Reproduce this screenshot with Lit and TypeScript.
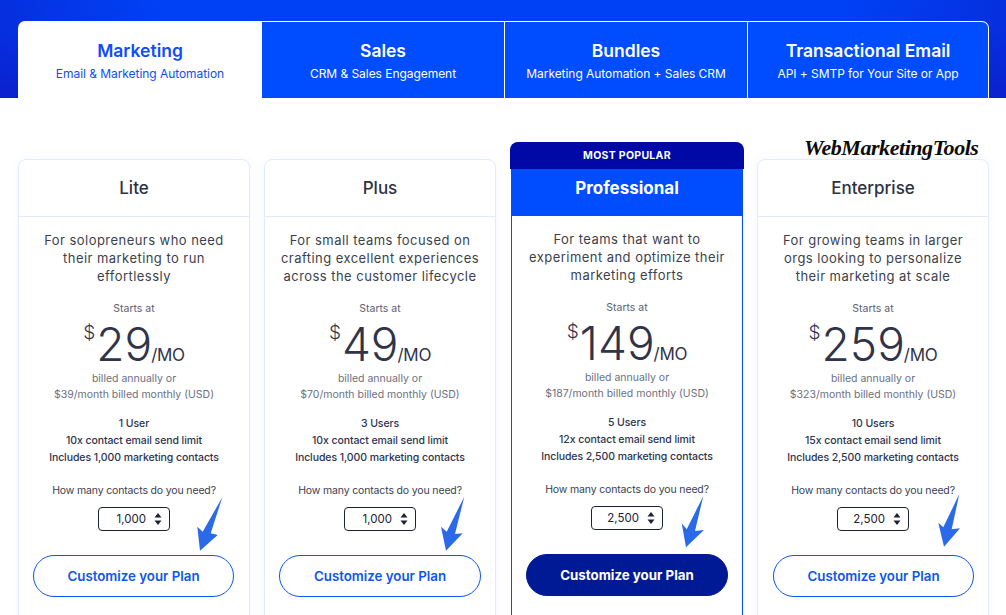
import { LitElement, html, css, svg } from "lit";
import { customElement } from "lit/decorators.js";

const tabs = [
  ["Marketing", "Email & Marketing Automation"],
  ["Sales", "CRM & Sales Engagement"],
  ["Bundles", "Marketing Automation + Sales CRM"],
  ["Transactional Email", "API + SMTP for Your Site or App"],
];

const plans = [
  { name: "Lite", desc: ["For solopreneurs who need", "their marketing to run", "effortlessly"], price: "29", monthly: "$39", feats: ["1 User", "10x contact email send limit", "Includes 1,000 marketing contacts"], qty: "1,000", popular: false },
  { name: "Plus", desc: ["For small teams focused on", "crafting excellent experiences", "across the customer lifecycle"], price: "49", monthly: "$70", feats: ["3 Users", "10x contact email send limit", "Includes 1,000 marketing contacts"], qty: "1,000", popular: false },
  { name: "Professional", desc: ["For teams that want to", "experiment and optimize their", "marketing efforts"], price: "149", monthly: "$187", feats: ["5 Users", "12x contact email send limit", "Includes 2,500 marketing contacts"], qty: "2,500", popular: true },
  { name: "Enterprise", desc: ["For growing teams in larger", "orgs looking to personalize", "their marketing at scale"], price: "259", monthly: "$323", feats: ["10 Users", "15x contact email send limit", "Includes 2,500 marketing contacts"], qty: "2,500", popular: false },
];

const arrows = [
  "M222.3 497.3 L210.7 533.3 L217.7 535 L200 550.7 L197.3 526.7 L202.7 531.7 Z",
  "M464.3 496.7 L455 534 L462.7 533.3 L446 550.7 L441 526.7 L446.7 531.7 Z",
  "M703.3 496 L695 531 L704 530 L686 547.3 L681.7 523.3 L686.7 529.3 Z",
  "M959.3 494 L951.7 529.3 L960 528.3 L944 546.7 L938.3 522.7 L943.3 527.3 Z",
];

@customElement("app-root")
export class AppRoot extends LitElement {
  static styles = css`
    :host { display: block; width: 1006px; height: 615px; overflow: hidden; background: #fff; position: relative;
      font-family: "Inter", "Roboto", sans-serif; color: #2d3142; }
    .hero { height: 98px; box-sizing: border-box; padding: 21px 18px 0;
      background: radial-gradient(ellipse 62% 150% at 50% 0%, #0041f5 55%, #0a22cf 100%); }
    .tabs { display: flex; height: 77px; width: 970px; }
    .tab { flex: 0 0 243px; box-sizing: border-box; background: #004cff; color: #fff; text-align: center;
      border-top: 1px solid #fff; border-right: 1px solid #fff; padding-top: 18px; }
    .tab:first-child { flex-basis: 244px; background: #fff; color: #0f4dff; border-radius: 7px 0 0 0; border: 0; padding-top: 19px; }
    .tab:last-child { flex-basis: 241px; border-radius: 0 7px 0 0; }
    .tab b { display: block; font-size: 17.5px; line-height: 21px; font-weight: 600; }
    .tab span { display: block; font-size: 12px; line-height: 16px; margin-top: 5px; letter-spacing: -0.05px; }
    .plans { display: flex; align-items: flex-start; padding: 61px 17px 0 18px; gap: 14px; }
    .card { position: relative; flex: 0 0 232px; box-sizing: border-box; height: 480px; border: 1px solid #e3ebfb;
      border-radius: 8px 8px 0 0; text-align: center; box-shadow: 0 0 12px rgba(60,90,220,.05); }
    .card.pop { margin: -17px 0 0 1px; height: 497px; border-width: 0 1px; border-color: #004cff; border-radius: 8px 8px 0 0; box-shadow: none; }
    .badge { margin: 0 -2px; height: 27px; background: #0009a5; color: #fff; border-radius: 8px 8px 0 0; font-size: 10.5px; font-weight: 700;
      line-height: 27px; letter-spacing: .3px; }
    .head { height: 57px; box-sizing: border-box; border-bottom: 1px solid #e3ebfb; font-size: 17px; line-height: 56px; font-weight: 500; color: #2d3142; }
    .pop .head { height: 47px; background: #004cff; color: #fff; border: 0; font-weight: 700; line-height: 38px; }
    .body { padding-top: 14px; }
    .desc { font-size: 13px; line-height: 18px; color: #3c3f4c; letter-spacing: .45px; white-space: nowrap; }
    .starts { margin-top: 17px; font-size: 10.5px; line-height: 14px; color: #5e6172; }
    .price { display: flex; justify-content: center; align-items: flex-start; height: 50px; margin-top: 3px; color: #30344a; font-weight: 300; white-space: nowrap; }
    .cur { font-size: 19px; line-height: 22px; margin-top: 3px; margin-right: 1px; }
    .num { font-size: 46px; line-height: 50px; }
    .mo { font-size: 17px; line-height: 22px; margin: 25px 0 0 -1px; font-weight: 400; letter-spacing: -.3px; }
    .billed { margin-top: 2px; font-size: 10.5px; line-height: 16px; color: #6d7080; }
    .feats { margin-top: 12px; font-size: 10.5px; line-height: 17px; color: #2d3350; font-weight: 500; white-space: nowrap; letter-spacing: -.08px; }
    .q { margin-top: 18px; font-size: 10.5px; line-height: 14px; color: #3c4050; white-space: nowrap; letter-spacing: -.15px; }
    .sel { display: flex; align-items: center; justify-content: flex-end; box-sizing: border-box; width: 72px; height: 24px; margin: 9px auto 0;
      border: 1px solid #1c2233; border-radius: 4px; font-size: 11.5px; color: #1c2233; padding-right: 7px; gap: 8px; }
    .sel svg { display: block; }
    .btn { box-sizing: border-box; width: 201px; height: 42px; margin: 24px 0 0 14px; border: 1px solid #0f55f0; border-radius: 21px;
      color: #0f55f0; font-size: 13.3px; font-weight: 600; line-height: 40px; }
    .card:nth-child(2) .btn { width: 202px; }
    .card:nth-child(4) .btn { margin-left: 15px; }
    .pop .btn { width: 202px; background: #001a96; border-color: #001a96; color: #fff; font-weight: 700; }
    .arrows { position: absolute; inset: 0; pointer-events: none; }
    .logo { position: absolute; left: 804px; top: 133px; font: italic 700 22px/30px "Liberation Serif", serif; color: #0b0b0b; letter-spacing: -.45px; }
  `;

  render() {
    return html`
      <div class="hero"><div class="tabs">
        ${tabs.map(([t, s]) => html`<div class="tab"><b>${t}</b><span>${s}</span></div>`)}
      </div></div>
      <div class="plans">
        ${plans.map((p) => html`
          <div class="card ${p.popular ? "pop" : ""}">
            ${p.popular ? html`<div class="badge">MOST POPULAR</div>` : ""}
            <div class="head">${p.name}</div>
            <div class="body">
              <div class="desc">${p.desc.map((d) => html`<div>${d}</div>`)}</div>
              <div class="starts">Starts at</div>
              <div class="price"><span class="cur">$</span><span class="num">${p.price}</span><span class="mo">/MO</span></div>
              <div class="billed">billed annually or<br />${p.monthly}/month billed monthly (USD)</div>
              <div class="feats">${p.feats.map((f) => html`<div>${f}</div>`)}</div>
              <div class="q">How many contacts do you need?</div>
              <div class="sel">${p.qty}
                <svg width="8" height="14" viewBox="0 0 8 14"><path d="M4 1 L7.5 5.5 H.5 Z M4 13 L.5 8.5 H7.5 Z" fill="#1c2233"/></svg>
              </div>
              <div class="btn">Customize your Plan</div>
            </div>
          </div>`)}
      </div>
      <svg class="arrows" width="1006" height="615" viewBox="0 0 1006 615">
        ${arrows.map((d) => svg`<path d=${d} fill="#2a6ae8"/>`)}
      </svg>
      <div class="logo">WebMarketingTools</div>
    `;
  }
}
